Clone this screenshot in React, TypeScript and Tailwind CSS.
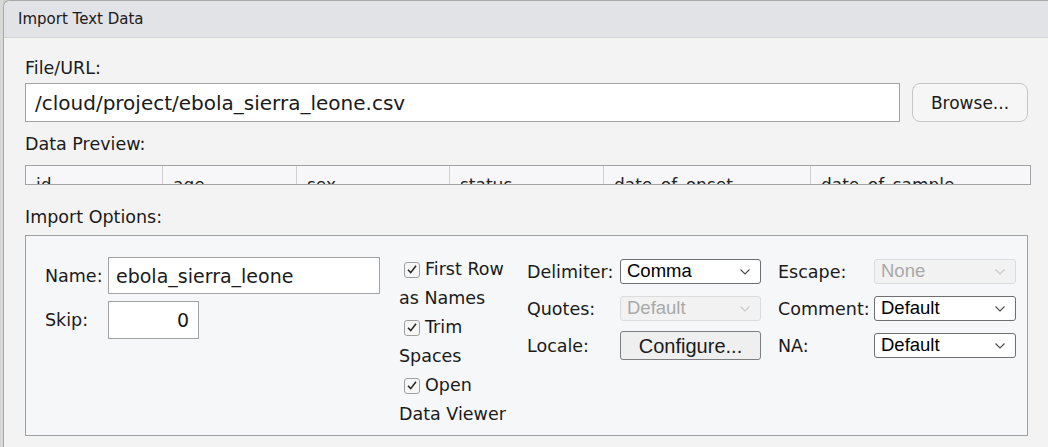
import React from 'react';

const ui = "font-['DejaVu_Sans',sans-serif]";
const sys = "font-['Liberation_Sans',Arial,sans-serif]";

const Chevron = ({ disabled }: { disabled?: boolean }) => (
  <svg width="12" height="8" viewBox="0 0 12 8" className="shrink-0">
    <path
      d="M1.5 1.5 L6 6 L10.5 1.5"
      fill="none"
      stroke={disabled ? '#c9c9c9' : '#4a4a4a'}
      strokeWidth="1.1"
    />
  </svg>
);

type SelectProps = { value: string; disabled?: boolean; width: string };

const Select = ({ value, disabled, width }: SelectProps) => (
  <div
    className={`${width} flex h-[25px] items-center justify-between rounded-[3px] border pl-[6px] pr-[9px] ${sys} text-[18.5px] leading-none ${
      disabled ? 'border-[#dcdcdc] bg-[#f2f2f2] text-[#a9a9a9]' : 'border-[#6f6f6f] bg-white text-black'
    }`}
  >
    <span>{value}</span>
    <Chevron disabled={disabled} />
  </div>
);

const Check = ({ first, second }: { first: string; second: string }) => (
  <div className="leading-[29px]">
    <div className="flex items-center">
      <span className="ml-[5px] mr-[5px] flex h-[16px] w-[16px] items-center justify-center rounded-[3px] border border-[#a0a0a0] bg-[#f7f7f7]">
        <svg width="12" height="11" viewBox="0 0 12 11">
          <path d="M2 5.8 L4.7 8.6 L10 1.8" fill="none" stroke="#222" strokeWidth="1.5" />
        </svg>
      </span>
      <span>{first}</span>
    </div>
    <div>{second}</div>
  </div>
);

const columns = [
  { name: 'id', w: 'w-[136px]' },
  { name: 'age', w: 'w-[134px]' },
  { name: 'sex', w: 'w-[153px]' },
  { name: 'status', w: 'w-[154px]' },
  { name: 'date_of_onset', w: 'w-[207px]' },
  { name: 'date_of_sample', w: 'flex-1' },
];

export default function App() {
  return (
    <div className={`flex h-[447px] w-[1048px] overflow-hidden bg-[#cdcdcd] ${ui} text-[#1a1a1a]`}>
      <div className="w-[3px] shrink-0 bg-[#d9d9d9]" />
      <div className="flex flex-1 flex-col overflow-hidden rounded-tl-[7px] border-l border-t border-[#a8a8a8] bg-[#f3f3f3]">
        <div className="flex h-[37px] shrink-0 items-center border-b border-[#d3d4d7] bg-[#e2e3e6] pl-[14px] text-[15px]">
          Import Text Data
        </div>

        <div className="flex flex-col pl-[21px] pr-[17px] text-[17.5px] leading-[22px]">
          <div className="mt-[19px]">File/URL:</div>
          <div className="mt-[4px] flex gap-[12px] pr-[3px]">
            <div className="flex h-[39px] w-[875px] items-center border border-[#a3a3a3] bg-white pl-[9px] text-[20px]">
              /cloud/project/ebola_sierra_leone.csv
            </div>
            <div className="flex h-[39px] flex-1 items-center justify-center rounded-[8px] border border-[#c6c6c6] bg-[#f6f6f6] text-[17px]">
              Browse...
            </div>
          </div>

          <div className="mt-[11px]">Data Preview:</div>
          <div className="mt-[10px] flex h-[20px] border border-[#a3a3a3] bg-[#f7f7f9]">
            {columns.map((c, i) => (
              <div
                key={c.name}
                className={`${c.w} h-full overflow-hidden pl-[10px] pt-[8px] text-[17px] leading-[22px] text-[#222] ${i > 0 ? 'border-l border-[#d0d0d0]' : ''}`}
              >
                {c.name}
              </div>
            ))}
          </div>

          <div className="mt-[21px]">Import Options:</div>
          <div className="mt-[7px] mr-[3px] flex h-[201px] border border-[#a0a0a0] bg-[#f6f7f8] pl-[19px] pt-[17px]">
            <div className="flex w-[354px] flex-col gap-[7px] pt-[4px]">
              <div className="flex items-center">
                <span className="w-[63px]">Name:</span>
                <div className="flex h-[37px] w-[272px] items-center border border-[#a3a3a3] bg-white pl-[7px] text-[19px]">
                  ebola_sierra_leone
                </div>
              </div>
              <div className="flex items-center">
                <span className="w-[63px]">Skip:</span>
                <div className="flex h-[38px] w-[91px] items-center justify-end border border-[#a3a3a3] bg-white pr-[9px] text-[19px]">
                  0
                </div>
              </div>
            </div>

            <div className="w-[128px] shrink-0 pt-[2px]">
              <Check first="First Row" second="as Names" />
              <Check first="Trim" second="Spaces" />
              <Check first="Open" second="Data Viewer" />
            </div>

            <div className="grid grid-cols-[93px_141px_17px_96px_142px] grid-rows-[37px_37px_37px] items-center">
              <span>Delimiter:</span>
              <Select value="Comma" width="w-[141px]" />
              <span />
              <span>Escape:</span>
              <Select value="None" disabled width="w-[142px]" />

              <span>Quotes:</span>
              <Select value="Default" disabled width="w-[141px]" />
              <span />
              <span>Comment:</span>
              <Select value="Default" width="w-[142px]" />

              <span>Locale:</span>
              <div className={`flex h-[29px] w-[141px] items-center justify-center rounded-[3px] border border-[#7e7e7e] bg-[#efefef] ${sys} text-[20px]`}>
                Configure...
              </div>
              <span />
              <span>NA:</span>
              <Select value="Default" width="w-[142px]" />
            </div>
          </div>
        </div>
      </div>
    </div>
  );
}
